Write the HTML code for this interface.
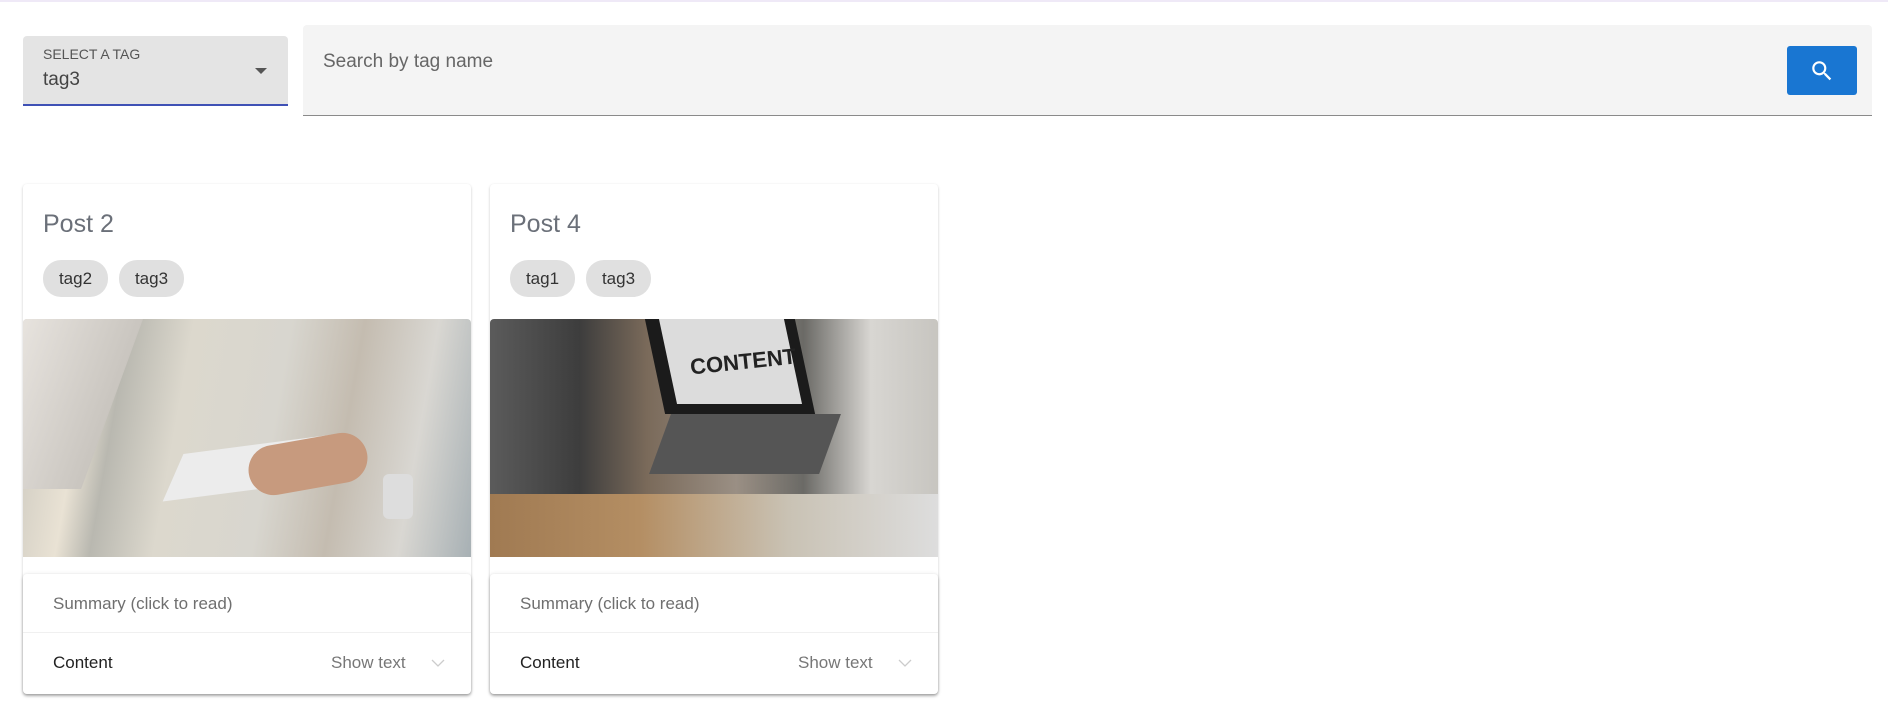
<!DOCTYPE html>
<html><head><meta charset="utf-8"><style>
*{box-sizing:border-box;margin:0;padding:0}
body{width:1888px;height:706px;background:#fff;font-family:"Liberation Sans",sans-serif;position:relative;overflow:hidden;border-top:2px solid #efe9f7}
.abs{position:absolute}
.sel{left:23px;top:34px;width:265px;height:70px;background:#e4e4e4;border-radius:4px 4px 0 0;border-bottom:2px solid #3f51b5}
.search{left:303px;top:23px;width:1569px;height:91px;background:#f4f4f4;border-radius:4px 4px 0 0;border-bottom:1px solid #8a8a8a}
.btn{left:1787px;top:44px;width:70px;height:49px;background:#1976d2;border-radius:3px}
.card{top:182px;width:448px;height:510px;background:#fff;border-radius:4px;box-shadow:0 1px 3px rgba(0,0,0,.12),0 1px 2px rgba(0,0,0,.1)}
.title{position:absolute;left:20px;top:26px;font-size:25px;color:#6b7079}
.chip{position:absolute;top:76px;height:37px;width:65px;border-radius:18px;background:#e0e0e0;font-size:17px;color:#333;text-align:center;line-height:37px}
.img{position:absolute;left:0;top:135px;width:448px;height:238px;border-radius:4px 4px 0 0;overflow:hidden}
.panel{position:absolute;left:0;top:390px;width:448px;height:120px;border-radius:4px;box-shadow:0 2px 3px rgba(0,0,0,.25),0 -1px 3px rgba(0,0,0,.06);background:#fff}
.sum{position:absolute;left:30px;top:20px;font-size:17px;color:#6f6f6f}
.div{position:absolute;left:0;top:58px;width:100%;height:1px;background:#f0f0f0}
.cont{position:absolute;left:30px;top:79px;font-size:17px;color:#222}
.show{position:absolute;left:308px;top:79px;font-size:17px;color:#777}
.chev{position:absolute;left:408px;top:84px}
</style></head><body>
<div class="abs sel">
 <div class="abs" style="left:20px;top:10px;font-size:14px;color:#555">SELECT A TAG</div>
 <div class="abs" style="left:20px;top:33px;font-size:19px;color:#444">tag3</div>
 <div class="abs" style="left:232px;top:32px;width:0;height:0;border-left:6px solid transparent;border-right:6px solid transparent;border-top:6px solid #555"></div>
</div>
<div class="abs search"><div class="abs" style="left:20px;top:26px;font-size:19px;color:#666">Search by tag name</div></div>
<div class="abs btn"><svg class="abs" style="left:22px;top:12px" width="26" height="26" viewBox="0 0 24 24"><path fill="#fff" d="M15.5 14h-.79l-.28-.27A6.47 6.47 0 0016 9.5 6.5 6.5 0 109.5 16c1.61 0 3.09-.59 4.230-1.57l.27.28v.79l5 4.99L20.49 19l-4.99-5zm-6 0C7.01 14 5 11.99 5 9.5S7.01 5 9.5 5 14 7.01 14 9.5 11.99 14 9.5 14z"/></svg></div>

<div class="abs card" style="left:23px">
 <div class="title">Post 2</div>
 <div class="chip" style="left:20px">tag2</div><div class="chip" style="left:96px">tag3</div>
 <div class="img" style="background:linear-gradient(100deg,#c9c6bd 0%,#e9e2d4 15%,#b9b8b0 22%,#dcd8cd 35%,#d8d6cf 55%,#c4bcb0 70%,#d9d7d2 85%,#a7b0b4 100%)">
  <div class="abs" style="left:0;top:0;width:120px;height:170px;background:linear-gradient(90deg,#e7e3de,#c9c5bf);transform:skewX(-20deg);transform-origin:top"></div>
  <div class="abs" style="left:155px;top:125px;width:140px;height:48px;background:#ececec;transform:skewX(-30deg) rotate(-8deg)"></div>
  <div class="abs" style="left:225px;top:120px;width:120px;height:50px;background:#c79a7e;border-radius:30px;transform:rotate(-10deg)"></div>
  <div class="abs" style="left:360px;top:155px;width:30px;height:45px;background:#ddd;border-radius:6px"></div>
 </div>
 <div class="panel"><div class="sum">Summary (click to read)</div><div class="div"></div><div class="cont">Content</div><div class="show">Show text</div>
 <svg class="chev" width="14" height="10" viewBox="0 0 14 10"><path d="M1 2l6 6 6-6" stroke="#ccc" fill="none" stroke-width="1.3"/></svg></div>
</div>

<div class="abs card" style="left:490px">
 <div class="title">Post 4</div>
 <div class="chip" style="left:20px">tag1</div><div class="chip" style="left:96px">tag3</div>
 <div class="img" style="background:linear-gradient(90deg,#5b5b5b 0%,#3d3d3d 20%,#7a6a5a 35%,#9a8f84 55%,#6b6a66 70%,#d8d6d2 85%,#c7c5c0 100%)">
  <div class="abs" style="left:165px;top:0;width:150px;height:95px;background:#1b1b1b;transform:skewX(12deg)"></div>
  <div class="abs" style="left:178px;top:0;width:125px;height:85px;background:#dcdcdc;transform:skewX(12deg)"></div>
  <div class="abs" style="left:200px;top:30px;font-size:22px;font-weight:bold;color:#222;transform:rotate(-6deg)">CONTENT</div>
  <div class="abs" style="left:170px;top:95px;width:170px;height:60px;background:#555;transform:skewX(-20deg)"></div>
  <div class="abs" style="left:0;top:175px;width:448px;height:63px;background:linear-gradient(90deg,#a07a52,#b48e63,#c9c2b4,#ddd)"></div>
 </div>
 <div class="panel"><div class="sum">Summary (click to read)</div><div class="div"></div><div class="cont">Content</div><div class="show">Show text</div>
 <svg class="chev" width="14" height="10" viewBox="0 0 14 10"><path d="M1 2l6 6 6-6" stroke="#ccc" fill="none" stroke-width="1.3"/></svg></div>
</div>
</body></html>
